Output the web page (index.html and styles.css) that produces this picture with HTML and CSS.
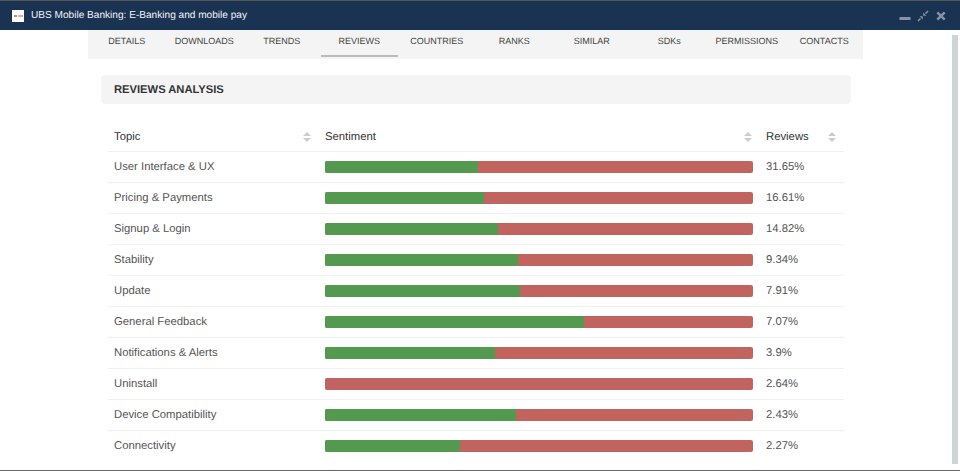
FILE: index.html
```html
<!DOCTYPE html>
<html lang="en">
<head>
<meta charset="utf-8">
<title>UBS Mobile Banking</title>
<link rel="stylesheet" href="styles.css">
</head>
<body>
<div class="window">
  <header class="titlebar">
    <span class="app-logo"><span class="logo-a"></span><span class="logo-b"></span></span>
    <span class="app-title">UBS Mobile Banking: E-Banking and mobile pay</span>
    <span class="win-controls">
      <svg class="win-icon" width="12" height="12" viewBox="0 0 12 12"><rect x="0.5" y="7" width="11" height="3" fill="#8593a5"/></svg>
      <svg class="win-icon" width="12" height="12" viewBox="0 0 12 12"><path d="M11 1L8.5 3.5M1 11L3.5 8.5" stroke="#8593a5" stroke-width="1.6" fill="none"/><path d="M6.2 2.6L9.4 5.8H6.2ZM2.6 6.2H5.8V9.4Z" fill="#8593a5"/></svg>
      <svg class="win-icon" width="12" height="12" viewBox="0 0 12 12"><path d="M2.3 2.3L9.7 9.7M9.7 2.3L2.3 9.7" stroke="#8593a5" stroke-width="2.4" fill="none"/></svg>
    </span>
  </header>
  <div class="body">
    <main class="main">
      <nav class="tabs">
        <a class="tab">DETAILS</a>
        <a class="tab">DOWNLOADS</a>
        <a class="tab">TRENDS</a>
        <a class="tab active">REVIEWS</a>
        <a class="tab">COUNTRIES</a>
        <a class="tab">RANKS</a>
        <a class="tab">SIMILAR</a>
        <a class="tab">SDKs</a>
        <a class="tab">PERMISSIONS</a>
        <a class="tab">CONTACTS</a>
      </nav>
      <section class="panel">
        <h2 class="panel-title">REVIEWS ANALYSIS</h2>
        <table class="grid">
          <colgroup><col class="c-topic"><col class="c-sent"><col class="c-rev"></colgroup>
          <thead>
            <tr>
              <th><span class="th-in">Topic<span class="sort"><i class="up"></i><i class="down"></i></span></span></th>
              <th><span class="th-in">Sentiment<span class="sort"><i class="up"></i><i class="down"></i></span></span></th>
              <th><span class="th-in">Reviews<span class="sort"><i class="up"></i><i class="down"></i></span></span></th>
            </tr>
          </thead>
          <tbody>
            <tr><td>User Interface &amp; UX</td><td><div class="bar"><div class="pos" style="width:35.8%"></div></div></td><td>31.65%</td></tr>
            <tr><td>Pricing &amp; Payments</td><td><div class="bar"><div class="pos" style="width:37.2%"></div></div></td><td>16.61%</td></tr>
            <tr><td>Signup &amp; Login</td><td><div class="bar"><div class="pos" style="width:40.4%"></div></div></td><td>14.82%</td></tr>
            <tr><td>Stability</td><td><div class="bar"><div class="pos" style="width:45.2%"></div></div></td><td>9.34%</td></tr>
            <tr><td>Update</td><td><div class="bar"><div class="pos" style="width:45.6%"></div></div></td><td>7.91%</td></tr>
            <tr><td>General Feedback</td><td><div class="bar"><div class="pos" style="width:60.5%"></div></div></td><td>7.07%</td></tr>
            <tr><td>Notifications &amp; Alerts</td><td><div class="bar"><div class="pos" style="width:39.7%"></div></div></td><td>3.9%</td></tr>
            <tr><td>Uninstall</td><td><div class="bar"><div class="pos" style="width:0%"></div></div></td><td>2.64%</td></tr>
            <tr><td>Device Compatibility</td><td><div class="bar"><div class="pos" style="width:44.6%"></div></div></td><td>2.43%</td></tr>
            <tr><td>Connectivity</td><td><div class="bar"><div class="pos" style="width:31.5%"></div></div></td><td>2.27%</td></tr>
          </tbody>
        </table>
      </section>
    </main>
    <div class="scroll-track"><div class="scroll-thumb"></div></div>
  </div>
</div>
</body>
</html>
```
FILE: styles.css
```css
* { box-sizing: border-box; }
html, body { margin: 0; padding: 0; height: 100%; overflow: hidden; background: #fff; }
body {
  font-family: "Liberation Sans", Arial, sans-serif;
  color: #555;
  text-rendering: geometricPrecision;
}

.window {
  height: 471px;
  display: flex;
  flex-direction: column;
  border-top: 1px solid #555;
  border-bottom: 1px solid #666;
}

.titlebar {
  flex: 0 0 29px;
  display: flex;
  align-items: center;
  padding: 0 13px 0 12px;
  background: #1a3353;
  color: #fff;
}
.app-logo {
  width: 12px;
  height: 12px;
  background: #fff;
  display: flex;
  align-items: center;
  justify-content: center;
  gap: 1px;
  margin-right: 7px;
}
.logo-a { width: 3px; height: 2px; background: #a89088; }
.logo-b { width: 5px; height: 2px; background: #eeaaaa; }
.app-title { font-size: 10.1px; color: #f2f4f7; }
.win-controls { margin-left: auto; display: flex; gap: 6px; }
.win-icon { display: block; }

.body { flex: 1; display: flex; min-height: 0; }
.main { flex: 1; min-width: 0; padding-left: 88px; overflow: hidden; }

.tabs {
  width: 775px;
  height: 29px;
  display: flex;
  background: #f4f4f4;
}
.tab {
  flex: 1 1 0;
  height: 27px;
  display: flex;
  align-items: center;
  justify-content: center;
  padding-bottom: 6px;
  font-size: 9px;
  color: #444;
  white-space: nowrap;
}
.tab.active { border-bottom: 2px solid #bbb; padding-bottom: 4px; }

.panel { width: 750px; margin: 16px 0 0 13px; }
.panel-title {
  margin: 0;
  height: 29px;
  line-height: 30px;
  padding-left: 13px;
  background: #f4f4f4;
  border-radius: 4px;
  font-size: 11.2px;
  font-weight: 700;
  color: #333;
}

.grid {
  width: 736px;
  margin: 16px 0 0 7px;
  border-collapse: collapse;
  table-layout: fixed;
  font-size: 11.3px;
}
.c-topic { width: 211px; }
.c-sent { width: 441px; }
.c-rev { width: 84px; }

.grid th {
  height: 31px;
  padding: 3px 6px 0;
  font-weight: 400;
  text-align: left;
  color: #333;
  border-bottom: 1px solid #f1f1f1;
}
.th-in { display: flex; justify-content: space-between; align-items: center; }
.sort { display: flex; flex-direction: column; gap: 2px; margin-right: 2px; }
.sort i { display: block; width: 0; height: 0; border-left: 4px solid transparent; border-right: 4px solid transparent; }
.sort .up { border-bottom: 4px solid #ccc; }
.sort .down { border-top: 4px solid #ccc; }

.grid td {
  height: 31px;
  padding: 0 6px;
  color: #555;
  border-bottom: 1px solid #f1f1f1;
}
.grid tr:last-child td { border-bottom: 0; }

.bar { height: 12px; margin-right: 1px; background: #c1635e; border-radius: 2px; overflow: hidden; }
.pos { height: 100%; background: #539a50; }

.scroll-track { flex: 0 0 8px; padding: 5px 2px 6px 0; }
.scroll-thumb { height: 100%; background: #cdd5d6; }
```
